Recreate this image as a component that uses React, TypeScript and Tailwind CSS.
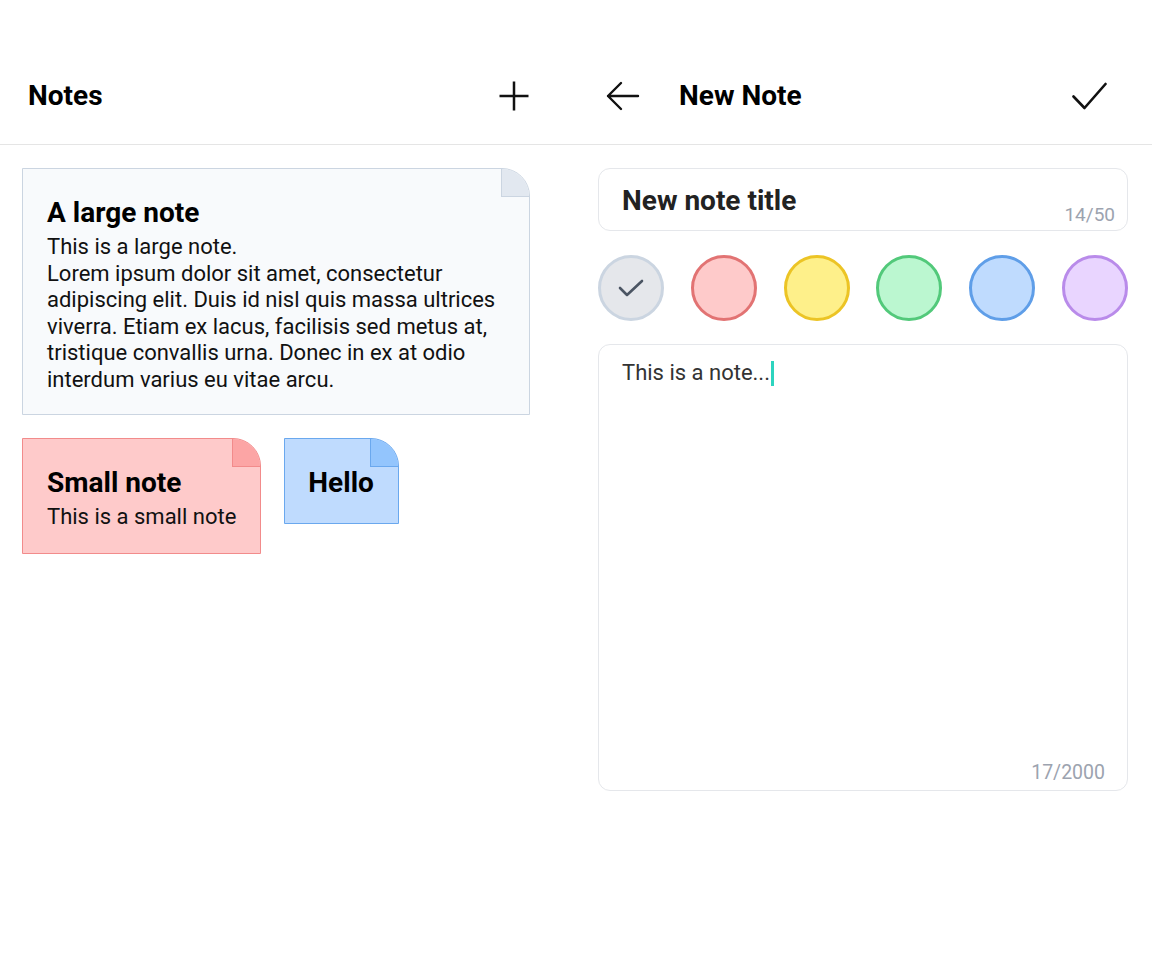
const notes = [
  {
    title: "A large note",
    body: "This is a large note.\nLorem ipsum dolor sit amet, consectetur adipiscing elit. Duis id nisl quis massa ultrices viverra. Etiam ex lacus, facilisis sed metus at, tristique convallis urna. Donec in ex at odio interdum varius eu vitae arcu.",
    card: "w-[508px] bg-[#f8fafc] border-[#cbd5e1] pb-[21px] pl-6",
    fold: "bg-[#e2e8f0] border-[#cbd5e1]",
  },
  {
    title: "Small note",
    body: "This is a small note",
    card: "bg-[#fecaca] border-[#f28b8b] pb-[22px] pl-6",
    fold: "bg-[#fca5a5] border-[#f28b8b]",
  },
  {
    title: "Hello",
    body: "",
    card: "bg-[#bfdbfe] border-[#6aa8ee] pb-[24px] pl-[23px]",
    fold: "bg-[#93c5fd] border-[#6aa8ee]",
  },
];

const swatches = [
  "bg-[#e5e7eb] border-[#cbd5e1]",
  "bg-[#fecaca] border-[#e27373]",
  "bg-[#fef08a] border-[#ecc425]",
  "bg-[#bbf7d0] border-[#52c97a]",
  "bg-[#bfdbfe] border-[#5f9ee8]",
  "bg-[#e9d5ff] border-[#b98bea]",
];

function NoteCard({ title, body, card, fold }: (typeof notes)[number]) {
  return (
    <div className={`relative overflow-hidden rounded-tr-[28px] border pr-6 pt-[28px] ${card}`}>
      <div className={`absolute top-0 right-0 h-[28px] w-[28px] border-b border-l ${fold}`} />
      <h2 className="text-[28px] leading-[32px] font-bold text-black">{title}</h2>
      {body && (
        <p className="mt-[5px] whitespace-pre-line text-[22px] leading-[26.5px] text-[#111]">{body}</p>
      )}
    </div>
  );
}

export default function App() {
  return (
    <div className="flex h-[976px] w-[1152px] bg-white font-['Roboto',sans-serif]">
      {/* list */}
      <div className="w-[576px]">
        <header className="flex h-[145px] items-center justify-between border-b border-[#e5e5e5] pt-[48px] pl-[28px] pr-[46px]">
          <h1 className="text-[28px] font-bold text-black">Notes</h1>
          <svg width="32" height="32" viewBox="0 0 32 32" fill="none" stroke="#111" strokeWidth="2.5">
            <path d="M16 1.5V30.5M1.5 16H30.5" />
          </svg>
        </header>
        <div className="flex flex-wrap items-start gap-[23px] px-[22px] pt-[23px]">
          {notes.map((n) => (
            <NoteCard key={n.title} {...n} />
          ))}
        </div>
      </div>

      {/* editor */}
      <div className="w-[576px]">
        <header className="flex h-[145px] items-center border-b border-[#e5e5e5] pt-[48px] pl-[30px] pr-[45px]">
          <svg width="34" height="30" viewBox="0 0 34 30" fill="none" stroke="#111" strokeWidth="2.4" strokeLinecap="round" strokeLinejoin="round">
            <path d="M2 15H32M15 2L2 15L15 28" />
          </svg>
          <h1 className="ml-[39px] text-[28px] font-bold text-black">New Note</h1>
          <svg className="ml-auto" width="35" height="28" viewBox="0 0 35 28" fill="none" stroke="#111" strokeWidth="2.6" strokeLinecap="round" strokeLinejoin="round">
            <path d="M1.5 14.5L12.5 26L33.5 2" />
          </svg>
        </header>

        <div className="pl-[22px] pr-[24px] pt-[23px]">
          <div className="relative h-[63px] rounded-[12px] border border-gray-200 pl-[23px] pt-[16px]">
            <span className="text-[28px] leading-[32px] font-bold text-[#222]">New note title</span>
            <span className="absolute right-[12px] bottom-[4px] text-[19px] leading-[22px] text-[#9ca3af]">14/50</span>
          </div>

          <div className="mt-[24px] flex justify-between">
            {swatches.map((s, i) => (
              <div key={s} className={`flex h-[66px] w-[66px] items-center justify-center rounded-full border-[3px] ${s}`}>
                {i === 0 && (
                  <svg width="26" height="20" viewBox="0 0 26 20" fill="none" stroke="#4b5563" strokeWidth="2.6" strokeLinecap="round" strokeLinejoin="round">
                    <path d="M2 10L9 17L24 3" />
                  </svg>
                )}
              </div>
            ))}
          </div>

          <div className="relative mt-[23px] h-[447px] rounded-[12px] border border-gray-200 pl-[23px] pt-[15px]">
            <div className="flex items-center text-[22px] leading-[26px] text-[#333]">
              This is a note...
              <span className="ml-[1px] inline-block h-[25px] w-[3px] bg-[#2dd4bf]" />
            </div>
            <span className="absolute right-[22px] bottom-[6px] text-[19.5px] leading-[22px] text-[#9ca3af]">17/2000</span>
          </div>
        </div>
      </div>
    </div>
  );
}
